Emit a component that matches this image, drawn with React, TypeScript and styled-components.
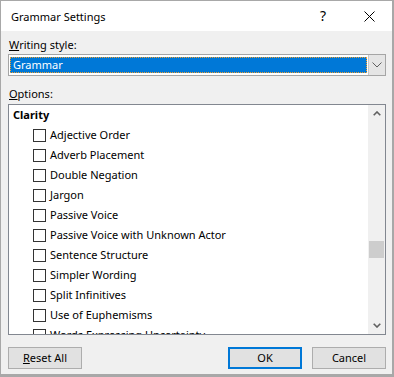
import React from 'react';
import styled, { createGlobalStyle } from 'styled-components';

const GlobalStyle = createGlobalStyle`
  html, body {
    margin: 0;
    padding: 0;
    background: #ffffff;
  }
  * {
    box-sizing: border-box;
  }
`;

const options = [
  'Adjective Order',
  'Adverb Placement',
  'Double Negation',
  'Jargon',
  'Passive Voice',
  'Passive Voice with Unknown Actor',
  'Sentence Structure',
  'Simpler Wording',
  'Split Infinitives',
  'Use of Euphemisms',
  'Words Expressing Uncertainty',
  'Wordiness',
];

const App: React.FC = () => {
  return (
    <>
      <GlobalStyle />
      <Dialog>
        <TitleBar>
          <Title>Grammar Settings</Title>
          <TitleButton>
            <HelpGlyph>?</HelpGlyph>
          </TitleButton>
          <TitleButton>
            <svg width="11" height="11" viewBox="0 0 11 11">
              <path d="M0.5 0.5 L10.5 10.5 M10.5 0.5 L0.5 10.5" stroke="#000" strokeWidth="1" fill="none" />
            </svg>
          </TitleButton>
        </TitleBar>

        <Body>
          <Label><u>W</u>riting style:</Label>
          <Select>
            <SelectValue>
              <SelectText>Grammar</SelectText>
            </SelectValue>
            <DropButton>
              <svg width="10" height="6" viewBox="0 0 10 6">
                <path d="M0.5 0.5 L5 5 L9.5 0.5" stroke="#606060" strokeWidth="1" fill="none" />
              </svg>
            </DropButton>
          </Select>

          <Label $top={10}><u>O</u>ptions:</Label>
          <ListBox>
            <ListItems>
              <GroupHeader>Clarity</GroupHeader>
              {options.map((name) => (
                <OptionRow key={name}>
                  <CheckBox />
                  <OptionText>{name}</OptionText>
                </OptionRow>
              ))}
            </ListItems>
            <ScrollBar>
              <ArrowButton>
                <svg width="8" height="5" viewBox="0 0 8 5">
                  <path d="M0.7 4.3 L4 1 L7.3 4.3" stroke="#606060" strokeWidth="1.6" fill="none" />
                </svg>
              </ArrowButton>
              <Track>
                <Thumb />
              </Track>
              <ArrowButton>
                <svg width="8" height="5" viewBox="0 0 8 5">
                  <path d="M0.7 0.7 L4 4 L7.3 0.7" stroke="#606060" strokeWidth="1.6" fill="none" />
                </svg>
              </ArrowButton>
            </ScrollBar>
          </ListBox>

          <ButtonRow>
            <Button><span><u>R</u>eset All</span></Button>
            <Spacer />
            <Button $primary>OK</Button>
            <Button>Cancel</Button>
          </ButtonRow>
        </Body>
      </Dialog>
    </>
  );
};

const Dialog = styled.div`
  width: 394px;
  height: 377px;
  display: flex;
  flex-direction: column;
  background: #f0f0f0;
  border-style: solid;
  border-color: #a8a8a8;
  border-width: 1px 2px 3px 1px;
  font-family: 'Segoe UI', 'Noto Sans', sans-serif;
  font-size: 11px;
  color: #000;
  overflow: hidden;
`;

const TitleBar = styled.div`
  height: 30px;
  flex: none;
  display: flex;
  align-items: center;
  background: #ffffff;
  padding-left: 10px;
`;

const Title = styled.div`
  flex: 1;
  font-size: 11px;
  line-height: 16px;
  padding-top: 1px;
`;

const TitleButton = styled.div`
  width: 46px;
  height: 30px;
  display: flex;
  align-items: center;
  justify-content: center;
`;

const HelpGlyph = styled.span`
  font-size: 14px;
  line-height: 16px;
`;

const Body = styled.div`
  flex: 1;
  display: flex;
  flex-direction: column;
  padding: 6px 6px 0 7px;
`;

const Label = styled.div<{ $top?: number }>`
  margin-top: ${(p) => p.$top ?? 0}px;
  line-height: 16px;
  height: 17px;
  padding-left: 1px;
`;

const Select = styled.div`
  height: 22px;
  display: flex;
  border: 1px solid #a5a5a5;
  background: #fff;
`;

const SelectValue = styled.div`
  flex: 1;
  padding: 2px 1px 2px 1px;
`;

const SelectText = styled.div`
  height: 16px;
  background: #0078d7;
  color: #fff;
  line-height: 14px;
  padding-left: 2px;
  border: 1px dotted #f0a030;
`;

const DropButton = styled.div`
  width: 17px;
  display: flex;
  align-items: center;
  justify-content: center;
  background: #e5e5e5;
  border-left: 1px solid #c8c8c8;
`;

const ListBox = styled.div`
  height: 231px;
  margin-top: 1px;
  display: flex;
  border: 1px solid #828790;
  background: #fff;
`;

const ListItems = styled.div`
  flex: 1;
  overflow: hidden;
`;

const GroupHeader = styled.div`
  height: 20px;
  line-height: 20px;
  padding-left: 4px;
  font-weight: bold;
`;

const OptionRow = styled.div`
  height: 20px;
  display: flex;
  align-items: center;
  padding-left: 24px;
`;

const CheckBox = styled.span`
  width: 13px;
  height: 13px;
  flex: none;
  border: 1px solid #333333;
  background: #fff;
  margin-right: 4px;
`;

const OptionText = styled.span`
  white-space: nowrap;
  line-height: 16px;
`;

const ScrollBar = styled.div`
  width: 17px;
  display: flex;
  flex-direction: column;
  background: #f0f0f0;
`;

const ArrowButton = styled.div`
  height: 17px;
  display: flex;
  align-items: center;
  justify-content: center;
`;

const Track = styled.div`
  flex: 1;
  position: relative;
`;

const Thumb = styled.div`
  position: absolute;
  left: 1px;
  right: 1px;
  top: 119px;
  height: 17px;
  background: #cdcdcd;
`;

const ButtonRow = styled.div`
  display: flex;
  gap: 10px;
  margin-top: 12px;
`;

const Spacer = styled.div`
  flex: 1;
`;

const Button = styled.div<{ $primary?: boolean }>`
  width: 74px;
  height: 22px;
  display: flex;
  align-items: center;
  justify-content: center;
  background: #e1e1e1;
  border: ${(p) => (p.$primary ? '2px solid #0078d7' : '1px solid #adadad')};
  line-height: 16px;
  white-space: nowrap;
`;

export default App;
